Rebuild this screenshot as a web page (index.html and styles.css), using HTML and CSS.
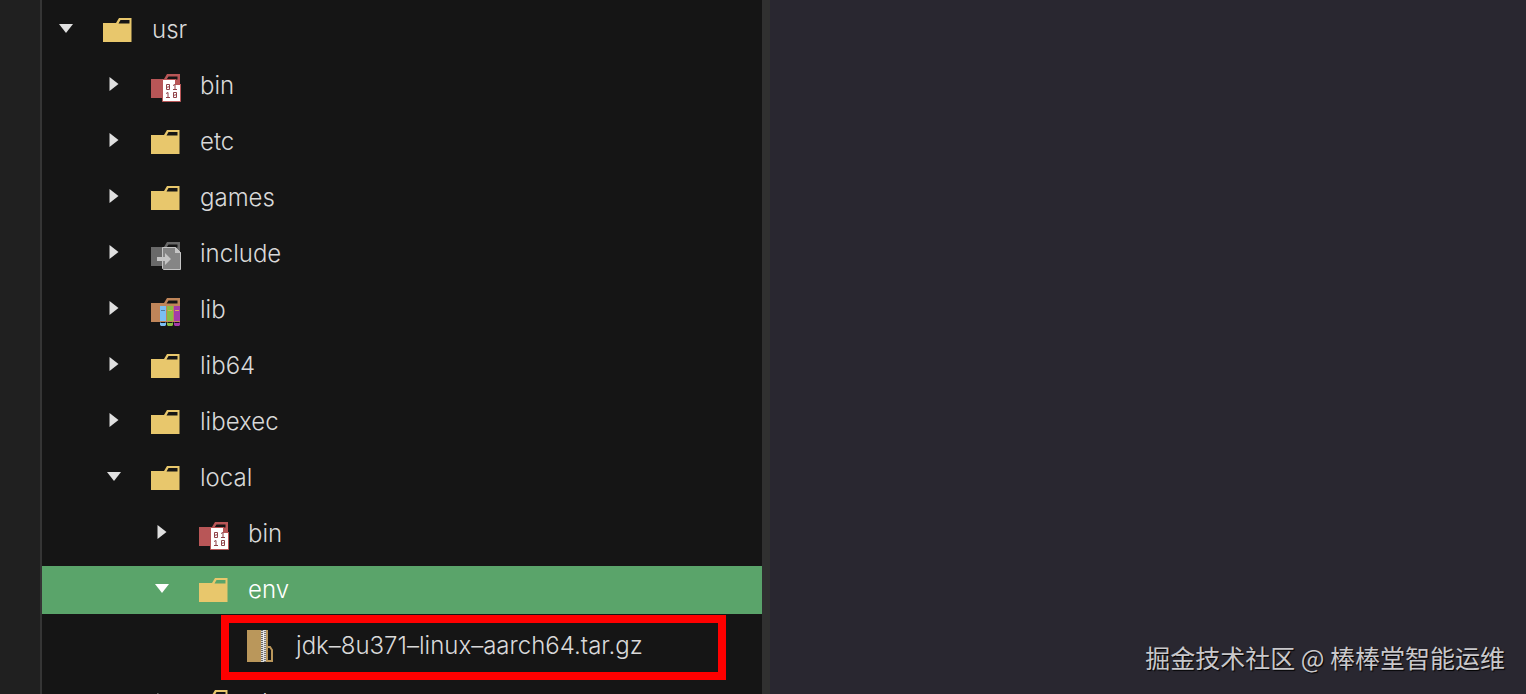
FILE: index.html
```html
<!doctype html>
<html lang="zh-CN">
<head>
	<meta charset="utf-8">
	<meta name="viewport" content="width=device-width, initial-scale=1.0">
	<title>usr</title>
	<link rel="stylesheet" href="styles.css">
</head>
<body>
	<!-- Shared icons -->
	<svg class="sprite" aria-hidden="true">
		<symbol id="down" viewBox="0 0 24 24"><path d="M5 6h14l-7 9z"/></symbol>
		<symbol id="right" viewBox="0 0 24 24"><path d="M7.500 3l9 7-9 7z"/></symbol>
		<symbol id="folder" viewBox="0 0 32 32">
			<path fill-rule="evenodd" d="M1 9h13l3-5h12.500v24H1zM18.500 6l-2 3.500h11V6z"/>
		</symbol>
		<symbol id="folder-bin" viewBox="0 0 32 32">
			<path fill="#b85657" fill-rule="evenodd" d="M1 9h13l3-5h13v24H1zM18.500 6.500l-2 3h11v-3z"/>
			<path fill="#fff" stroke="#b85657" d="M12.500 9.500h13l5 5v17h-18z"/>
			<path fill="#b85657" d="M25 9v6h6z"/>
			<path fill="none" stroke="#8f4248" d="M16.500 14.500h3v5h-3zM16 17.500l4-1M23 15.500l2-1v5M23 19.500h4M16 23.500l2-1v5M16 27.500h4M23.500 22.500h3v5h-3zM23 25.500l4-1"/>
		</symbol>
		<symbol id="folder-include" viewBox="0 0 32 32">
			<path fill="#696969" fill-rule="evenodd" d="M1 9h13l3-5h13v24H1zM18.500 6.500l-2 3h11v-3z"/>
			<path fill="#858585" stroke="#c5c5c5" d="M12.500 9.500h13l5 5v17h-17l-1-1z"/>
			<path fill="#c5c5c5" d="M25 9v6h6zM7 19h8v-4l6 6-6 6v-4H7z"/>
		</symbol>
		<symbol id="folder-lib" viewBox="0 0 32 32">
			<path fill="#bf8559" fill-rule="evenodd" d="M1 9h13l3-5h13v24H1zM18.500 6.500l-2 3h11v-3z"/>
			<path fill="#7bbef2" d="M10 12h6v15h-6zM10 29l1-1h4l1 1v2l-1 1h-4l-1-1z"/>
			<path fill="#88bd43" d="M17 12h6v15h-6zM17 29l1-1h4l1 1v2l-1 1h-4l-1-1z"/>
			<path fill="#a33baa" d="M24 12h6v15h-6zM24 29l1-1h4l1 1v2l-1 1h-4l-1-1z"/>
			<path stroke="#54799a" d="M11 16.500h4"/>
			<path stroke="#d7ac57" d="M18 16.500h4M25 16.500h4"/>
			<path stroke="#151515" d="M11 28.500h4M18 28.500h4M25 28.500h4"/>
		</symbol>
		<symbol id="archive" viewBox="0 0 32 32">
			<path fill="#ba975b" d="M1 0h21v32H1z"/>
			<path fill="none" stroke="#ba975b" stroke-width="2" d="M21 17h3l2 3v11h-5v-12"/>
			<path stroke="#ddd" stroke-width="5" d="M17.500 0v32"/>
			<path stroke="#666" stroke-width="2" stroke-dasharray="1 1" d="M16 0v32"/>
			<path stroke="#777" stroke-width="2" stroke-dasharray="1 1" d="M19 1v31"/>
			<path stroke="#eee" d="M17.500 3v10"/>
		</symbol>
	</svg>

	<aside class="sidebar">
		<div class="gutter"></div>
		<nav class="files" aria-label="Files">
			<ul class="tree">
				<li><button class="row" type="button" aria-expanded="true"><svg class="arrow"><use href="#down"/></svg><svg class="icon"><use href="#folder"/></svg>usr</button>
					<ul class="tree level-1">
						<li><button class="row" type="button"><svg class="arrow"><use href="#right"/></svg><svg class="icon"><use href="#folder-bin"/></svg>bin</button></li>
						<li><button class="row" type="button"><svg class="arrow"><use href="#right"/></svg><svg class="icon"><use href="#folder"/></svg>etc</button></li>
						<li><button class="row" type="button"><svg class="arrow"><use href="#right"/></svg><svg class="icon"><use href="#folder"/></svg>games</button></li>
						<li><button class="row" type="button"><svg class="arrow"><use href="#right"/></svg><svg class="icon"><use href="#folder-include"/></svg>include</button></li>
						<li><button class="row" type="button"><svg class="arrow"><use href="#right"/></svg><svg class="icon"><use href="#folder-lib"/></svg>lib</button></li>
						<li><button class="row" type="button"><svg class="arrow"><use href="#right"/></svg><svg class="icon"><use href="#folder"/></svg>lib64</button></li>
						<li><button class="row" type="button"><svg class="arrow"><use href="#right"/></svg><svg class="icon"><use href="#folder"/></svg>libexec</button></li>
						<li><button class="row" type="button" aria-expanded="true"><svg class="arrow"><use href="#down"/></svg><svg class="icon"><use href="#folder"/></svg>local</button>
							<ul class="tree level-2">
								<li><button class="row" type="button"><svg class="arrow"><use href="#right"/></svg><svg class="icon"><use href="#folder-bin"/></svg>bin</button></li>
								<li><button class="row row-active" type="button" aria-expanded="true"><svg class="arrow"><use href="#down"/></svg><svg class="icon"><use href="#folder"/></svg>env</button>
									<ul class="tree level-3">
										<li class="marked"><a class="row" href="#"><span class="arrow"></span><svg class="icon"><use href="#archive"/></svg>jdk–8u371–linux–aarch64.tar.gz</a></li>
									</ul>
								</li>
								<li><button class="row" type="button"><svg class="arrow"><use href="#right"/></svg><svg class="icon"><use href="#folder"/></svg>etc</button></li>
							</ul>
						</li>
					</ul>
				</li>
			</ul>
		</nav>
	</aside>

	<main class="editor">
		<p class="credit">掘金技术社区 @ 棒棒堂智能运维</p>
	</main>
</body>
</html>
```
FILE: styles.css
```css
*,
*::after {
	box-sizing: border-box;
}

:root {
	--background-color: #151515;
	--text-color: #d9d9d9;
	--folder-color: #e8c76c;
	--active-color: #5aa46a;
}

body {
	display: flex;
	height: 100vh;
	margin: 0;
	overflow: hidden;
	font-family: Inter, "Noto Sans CJK SC", sans-serif;
	color: var(--text-color);
	background-color: var(--background-color);
}

.sprite {
	position: absolute;
	width: 0;
	height: 0;
}

/* Sidebar */
.sidebar {
	display: flex;
	flex: 0 1 770px;
	border-right: 8px solid #303030;
}

.gutter {
	flex: none;
	width: 42px;
	background-color: #202020;
	border-right: 2px solid #353535;
}

.files {
	flex: 1;
	min-width: 0;
	padding-top: 6px;
}

/* File tree */
.tree {
	--indent: 12px;
	margin: 0;
	padding: 0;
	list-style: none;
}

.level-1 {
	--indent: 60px;
}

.level-2 {
	--indent: 108px;
}

.level-3 {
	--indent: 156px;
}

.row {
	display: flex;
	align-items: center;
	width: 100%;
	height: 48px;
	margin-bottom: 8px;
	padding: 0 0 0 var(--indent);
	border: 0;
	background: none;
	color: inherit;
	font-family: inherit;
	font-size: 24px;
	font-weight: 300;
	line-height: 32px;
	text-align: left;
	text-decoration: none;
	white-space: nowrap;
}

.row-active {
	background-color: var(--active-color);
	color: #fff;
}

.arrow {
	flex: none;
	width: 24px;
	height: 24px;
	margin-right: 24px;
	fill: #e0e0e0;
}

.row-active .arrow {
	fill: #fff;
}

.icon {
	flex: none;
	width: 32px;
	height: 32px;
	margin-right: 18px;
	fill: var(--folder-color);
}

/* Red frame round the uploaded file */
.marked {
	position: relative;
}

.marked::after {
	position: absolute;
	top: -7px;
	left: 179px;
	width: 505px;
	height: 65px;
	border: 8px solid #f00;
	content: "";
	pointer-events: none;
}

/* Editor */
.editor {
	display: flex;
	flex: 1;
	align-items: flex-end;
	justify-content: flex-end;
	padding: 0 21px 19px;
	background-color: #292730;
}

.credit {
	margin: 0;
	font-family: "Noto Sans CJK SC", sans-serif;
	font-size: 25px;
	line-height: 36px;
	color: #c9c8cb;
	text-shadow: 1px 1px 1px #000;
	white-space: nowrap;
}
```
